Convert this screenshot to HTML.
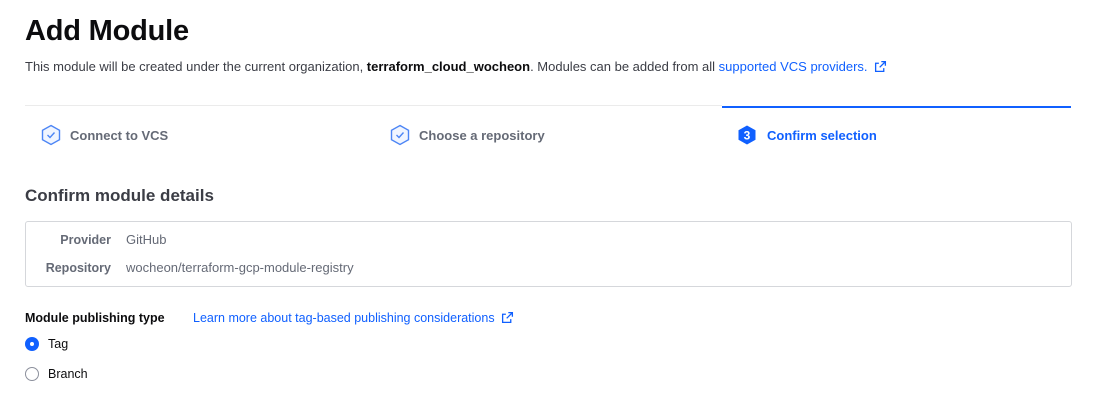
<!DOCTYPE html>
<html><head><style>
body{margin:0;background:#fff;font-family:"Liberation Sans",sans-serif;color:#0c0c0e;width:1096px;height:401px;overflow:hidden;position:relative}
.a{position:absolute;white-space:nowrap}
h1{position:absolute;left:25px;top:15px;margin:0;font-size:29px;font-weight:bold;letter-spacing:-0.2px}
.sub{left:25px;top:59px;font-size:13px;color:#3b3d45}
.lnk{color:#1060ff}
.step{font-size:13px;font-weight:bold;color:#656a76;top:128px}
.lbl{font-size:12.5px;font-weight:bold;color:#656a76;text-align:right;width:86px;left:25px}
.val{font-size:13px;color:#656a76;left:126px}
</style></head><body>
<h1>Add Module</h1>
<div class="a sub">This module will be created under the current organization, <b style="color:#0c0c0e">terraform_cloud_wocheon</b>. Modules can be added from all <span class="lnk">supported VCS providers.</span>
<svg width="13" height="13" viewBox="0 0 16 16" style="vertical-align:-2px;margin-left:3px" fill="none" stroke="#1060ff" stroke-width="1.6"><path d="M9 2h5v5M14 2L7 9M12 10v4H2V4h4"/></svg></div>
<div class="a" style="left:25px;top:105px;width:697px;height:1px;background:#ebebeb"></div>
<div class="a" style="left:722px;top:106px;width:349px;height:2px;background:#1060ff"></div>
<svg class="a" style="left:40px;top:124px" width="22" height="22" viewBox="0 0 22 22"><path d="M11 1.5l8.5 4.8v9.4L11 20.5 2.5 15.7V6.3z" fill="#f0f5ff" stroke="#4c85f5" stroke-width="1.4"/><path d="M7.5 11l2.5 2.5 4.5-5" fill="none" stroke="#4c85f5" stroke-width="1.4"/></svg>
<div class="a step" style="left:70px">Connect to VCS</div>
<svg class="a" style="left:389px;top:124px" width="22" height="22" viewBox="0 0 22 22"><path d="M11 1.5l8.5 4.8v9.4L11 20.5 2.5 15.7V6.3z" fill="#f0f5ff" stroke="#4c85f5" stroke-width="1.4"/><path d="M7.5 11l2.5 2.5 4.5-5" fill="none" stroke="#4c85f5" stroke-width="1.4"/></svg>
<div class="a step" style="left:419px">Choose a repository</div>
<svg class="a" style="left:737px;top:125px" width="20" height="20" viewBox="0 0 20 20"><path d="M10 0.5l8.5 4.8v9.4L10 19.5 1.5 14.7V5.3z" fill="#1060ff"/><text x="10" y="14.5" text-anchor="middle" font-family="Liberation Sans" font-size="12" font-weight="bold" fill="#fff">3</text></svg>
<div class="a step" style="left:767px;color:#1060ff">Confirm selection</div>
<div class="a" style="left:25px;top:186px;font-size:17px;font-weight:bold;color:#3b3d45">Confirm module details</div>
<div class="a" style="left:25px;top:221px;width:1045px;height:64px;border:1px solid #d5d7db;border-radius:3px"></div>
<div class="a lbl" style="top:233px">Provider</div><div class="a val" style="top:232px">GitHub</div>
<div class="a lbl" style="top:261px">Repository</div><div class="a val" style="top:260px">wocheon/terraform-gcp-module-registry</div>
<div class="a" style="left:25px;top:311px;font-size:12.5px;font-weight:bold;color:#0c0c0e">Module publishing type</div>
<div class="a" style="left:193px;top:311px;font-size:12.5px;color:#1060ff">Learn more about tag-based publishing considerations
<svg width="13" height="13" viewBox="0 0 16 16" style="vertical-align:-2px;margin-left:3px" fill="none" stroke="#1060ff" stroke-width="1.6"><path d="M9 2h5v5M14 2L7 9M12 10v4H2V4h4"/></svg></div>
<div class="a" style="left:25px;top:337px;width:14px;height:14px;border-radius:50%;background:#1060ff"></div>
<div class="a" style="left:30px;top:342px;width:4px;height:4px;border-radius:50%;background:#fff"></div>
<div class="a" style="left:48px;top:337px;font-size:12.5px">Tag</div>
<div class="a" style="left:25px;top:367px;width:12px;height:12px;border-radius:50%;border:1px solid #8c909c"></div>
<div class="a" style="left:48px;top:367px;font-size:12.5px">Branch</div>
</body></html>
